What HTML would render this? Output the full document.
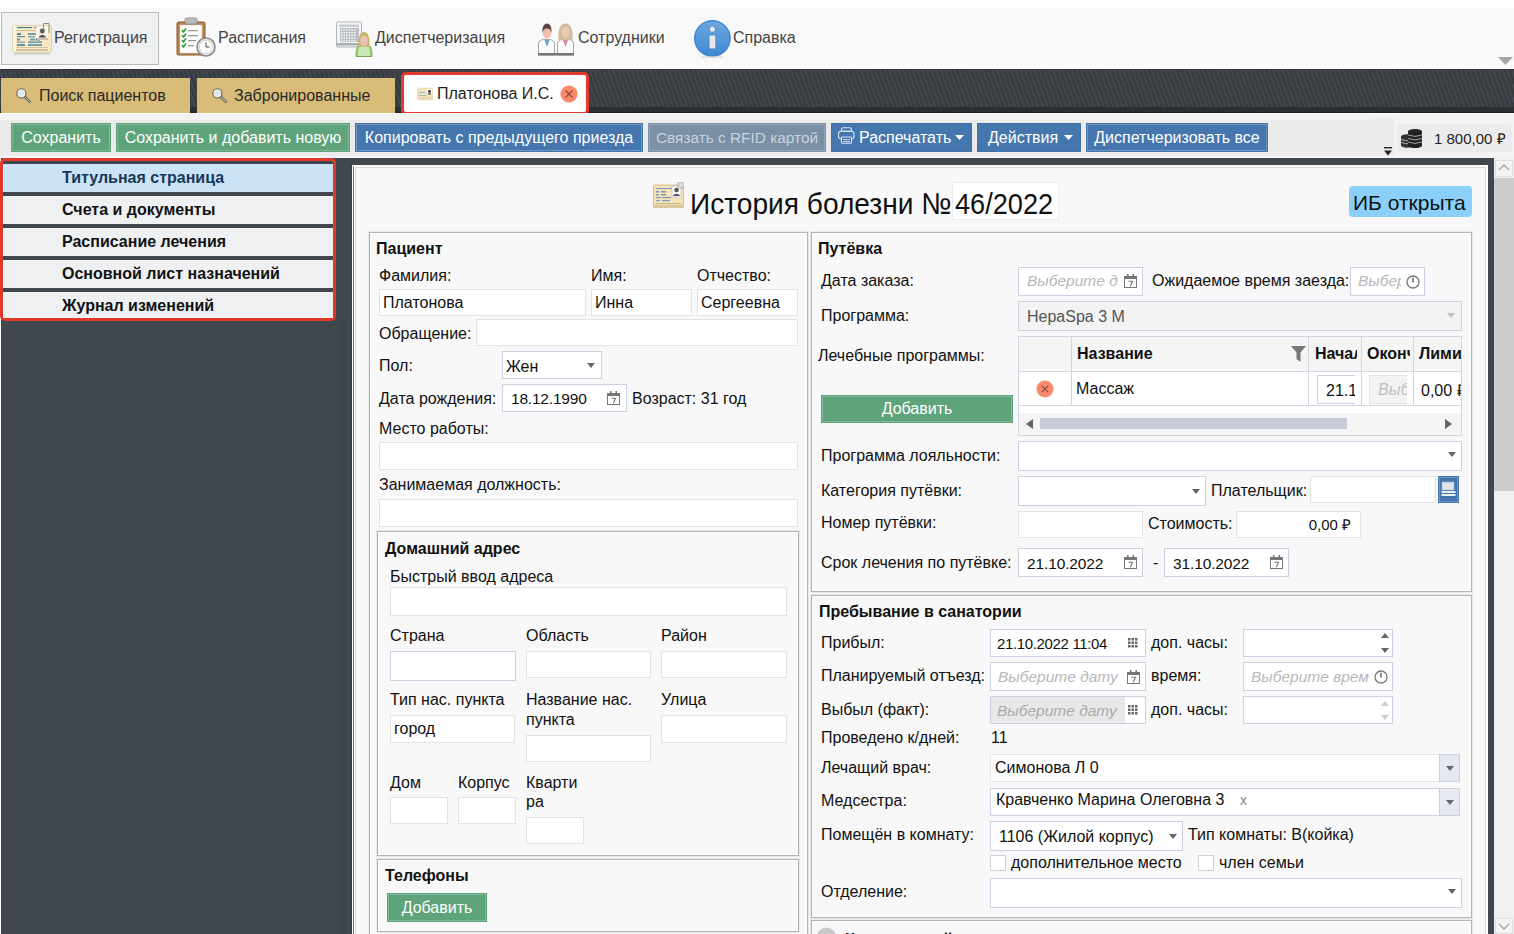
<!DOCTYPE html>
<html><head><meta charset="utf-8">
<style>
*{box-sizing:border-box;margin:0;padding:0}
html,body{width:1514px;height:934px;overflow:hidden;background:#f7f7f7;font-family:"Liberation Sans",sans-serif;font-size:16px;color:#111;position:relative}
.a{position:absolute;display:block}
.t{position:absolute;white-space:nowrap;font-size:16px;line-height:16px}
</style></head><body>
<div class="a" style="left:0px;top:0px;width:1514px;height:8px;background:#ffffff;"></div>
<div class="a" style="left:0px;top:8px;width:1514px;height:60px;background:#f9f9f9;"></div>
<div class="a" style="left:0px;top:67px;width:1514px;height:2px;background:#fdfdfd;"></div>
<div class="a" style="left:0px;top:8px;width:1px;height:60px;background:#ffffff;"></div>
<div class="a" style="left:1px;top:12px;width:158px;height:53px;background:#eff0f2;border:1px solid #b9b9b9;"></div>
<div class="t" style="left:54px;top:30px;color:#444;">Регистрация</div>
<div class="t" style="left:218px;top:30px;color:#444;">Расписания</div>
<div class="t" style="left:375px;top:30px;color:#444;">Диспетчеризация</div>
<div class="t" style="left:578px;top:30px;color:#444;">Сотрудники</div>
<div class="t" style="left:733px;top:30px;color:#444;">Справка</div>
<svg class="a" style="left:12px;top:22px;" width="42" height="35" viewBox="0 0 42 35">
<rect x="2" y="30.5" width="36" height="2.5" fill="#cfcfcf" opacity="0.8"/>
<rect x="0.7" y="3.4" width="38.8" height="27.2" rx="2.2" fill="#f7e9c6" stroke="#d9cda9" stroke-width="0.9"/>
<rect x="1.3" y="4" width="2.5" height="26" fill="#fdf5dd"/>
<g fill="#3f7f9f">
<rect x="5" y="5" width="15" height="1.1"/><rect x="21" y="5" width="4" height="1.1" opacity="0.6"/>
<rect x="5" y="11" width="4" height="2" opacity="0.9"/><rect x="16" y="11" width="8" height="2" opacity="0.7"/>
<rect x="5" y="14" width="8" height="1.2" opacity="0.8"/><rect x="16" y="14" width="7" height="1.2" opacity="0.7"/>
<rect x="5" y="16.5" width="3" height="2" opacity="0.8"/><rect x="18" y="16.5" width="5" height="2" opacity="0.7"/><rect x="24" y="16.5" width="4" height="2"/>
<rect x="5" y="19.5" width="8" height="1.2" opacity="0.7"/><rect x="16" y="19.5" width="14" height="1.2"/>
<rect x="5" y="22" width="8" height="2" opacity="0.8"/><rect x="16" y="22" width="14" height="2" opacity="0.7"/></g>
<rect x="4" y="8" width="20" height="0.9" fill="#cbbb98"/>
<rect x="4" y="25" width="32" height="1" fill="#d6c7a4"/>
<rect x="4" y="27" width="32" height="2" fill="#d2c4a6"/>
<rect x="25" y="16" width="11" height="2" fill="#cdbf9d"/>
<rect x="24.8" y="4.8" width="11.3" height="11.1" fill="#fff"/>
<rect x="26.5" y="6" width="8" height="9.5" fill="#ece9df"/>
<circle cx="30.3" cy="9" r="2.4" fill="#5a5a55"/><path d="M26.8 15.5c.3-3.5 6.7-3.5 7 0z" fill="#4a4a46"/>
<path d="M31.5 8V1.5h5.5V11" fill="none" stroke="#8b8b8b" stroke-width="1"/>
</svg>
<svg class="a" style="left:176px;top:17px;" width="42" height="40" viewBox="0 0 42 40">
<rect x="1" y="5" width="28" height="33" rx="1.5" fill="#b8804a" stroke="#8a5a2a"/>
<rect x="4" y="8" width="22" height="28" fill="#fff" stroke="#ccc" stroke-width="0.6"/>
<rect x="9" y="1" width="12" height="6" rx="1.5" fill="#bbb" stroke="#888" stroke-width="0.8"/>
<g stroke="#2a9a2a" stroke-width="1.5" fill="none"><path d="M6 13l1.5 2 2.5-3.5"/><path d="M6 18l1.5 2 2.5-3.5"/><path d="M6 23l1.5 2 2.5-3.5"/><path d="M6 28l1.5 2 2.5-3.5"/></g>
<g fill="#999"><rect x="12" y="13" width="10" height="1.3"/><rect x="12" y="18" width="10" height="1.3"/><rect x="12" y="23" width="8" height="1.3"/><rect x="12" y="28" width="6" height="1.3"/></g>
<circle cx="30" cy="30" r="9" fill="#e9e9e9" stroke="#8a8a8a" stroke-width="1.6"/>
<circle cx="30" cy="30" r="6.5" fill="#fff" stroke="#bbb" stroke-width="0.6"/>
<path d="M30 25.5v4.5h3.5" stroke="#333" stroke-width="0.9" fill="none"/>
</svg>
<svg class="a" style="left:336px;top:20px;" width="40" height="38" viewBox="0 0 40 38">
<rect x="0.5" y="2" width="25" height="25" rx="1" fill="#f4f7f9" stroke="#b5b5b5"/>
<rect x="3" y="4.5" width="20" height="2.5" fill="#c9ced3"/>
<rect x="4" y="8" width="19" height="14" fill="#b9bfc5"/>
<rect x="1" y="23" width="24" height="2.5" fill="#a9adb1"/>
<g fill="#fff"><rect x="5.0" y="9.3" width="1.4" height="1.4"/><rect x="7.6" y="9.3" width="1.4" height="1.4"/><rect x="10.2" y="9.3" width="1.4" height="1.4"/><rect x="12.8" y="9.3" width="1.4" height="1.4"/><rect x="15.4" y="9.3" width="1.4" height="1.4"/><rect x="18.0" y="9.3" width="1.4" height="1.4"/><rect x="5.0" y="12.0" width="1.4" height="1.4"/><rect x="7.6" y="12.0" width="1.4" height="1.4"/><rect x="10.2" y="12.0" width="1.4" height="1.4"/><rect x="12.8" y="12.0" width="1.4" height="1.4"/><rect x="15.4" y="12.0" width="1.4" height="1.4"/><rect x="18.0" y="12.0" width="1.4" height="1.4"/><rect x="5.0" y="14.7" width="1.4" height="1.4"/><rect x="7.6" y="14.7" width="1.4" height="1.4"/><rect x="10.2" y="14.7" width="1.4" height="1.4"/><rect x="12.8" y="14.7" width="1.4" height="1.4"/><rect x="15.4" y="14.7" width="1.4" height="1.4"/><rect x="18.0" y="14.7" width="1.4" height="1.4"/><rect x="5.0" y="17.4" width="1.4" height="1.4"/><rect x="7.6" y="17.4" width="1.4" height="1.4"/><rect x="10.2" y="17.4" width="1.4" height="1.4"/><rect x="12.8" y="17.4" width="1.4" height="1.4"/><rect x="15.4" y="17.4" width="1.4" height="1.4"/><rect x="18.0" y="17.4" width="1.4" height="1.4"/><rect x="5.0" y="20.1" width="1.4" height="1.4"/><rect x="7.6" y="20.1" width="1.4" height="1.4"/><rect x="10.2" y="20.1" width="1.4" height="1.4"/><rect x="12.8" y="20.1" width="1.4" height="1.4"/><rect x="15.4" y="20.1" width="1.4" height="1.4"/><rect x="18.0" y="20.1" width="1.4" height="1.4"/><rect x="20.6" y="9.3" width="1.4" height="1.4" fill="#f2a0a8"/><rect x="20.6" y="12.0" width="1.4" height="1.4" fill="#f2a0a8"/><rect x="20.6" y="14.7" width="1.4" height="1.4" fill="#f2a0a8"/><rect x="20.6" y="17.4" width="1.4" height="1.4" fill="#f2a0a8"/><rect x="20.6" y="20.1" width="1.4" height="1.4" fill="#f2a0a8"/></g>
<path d="M20 36.5c0-6 1-10 3-11h10c2 1 3 5 3 11z" fill="#9ad07e" stroke="#5f9a45" stroke-width="0.8"/>
<path d="M23.5 26h9c1 3 1.5 6 1.5 10h-12c0-4 .5-7 1.5-10z" fill="#c9eab5"/>
<path d="M22.5 27c-.5-9 1-15 5.5-15s6 6 5.5 15z" fill="#c9b56a"/>
<ellipse cx="28" cy="21" rx="3.8" ry="5.5" fill="#eac3b5"/>
</svg>
<svg class="a" style="left:537px;top:22px;" width="38" height="34" viewBox="0 0 38 34">
<path d="M20.5 33V22c0-3 2-4 5-4.5h6c3 .5 5 1.5 5 4.5v11z" fill="#fbfbfb" stroke="#9a9a9a" stroke-width="0.9"/>
<path d="M26 18l2.5 7 2.5-7z" fill="#d98a98"/>
<path d="M21.5 18c-.8-10 1.5-16.5 7-16.5s7.8 6.5 7 16.5z" fill="#cdbd9c"/>
<ellipse cx="28.5" cy="10.5" rx="4.2" ry="6" fill="#efc6b6"/>
<path d="M1.5 33V22c0-3 2-4 5-4.5h6c3 .5 5 1.5 5 4.5v11z" fill="#fbfbfb" stroke="#9a9a9a" stroke-width="0.9"/>
<path d="M7.5 18l2.5 7 2.5-7z" fill="#6aa3cf"/>
<ellipse cx="10" cy="10.5" rx="4.3" ry="6" fill="#edc0ae"/>
<path d="M5.5 11c-.5-6 1.5-9.5 4.5-9.5s5 3.5 4.5 9.5c-.5-3-2-4.5-4.5-4.5s-4 1.5-4.5 4.5z" fill="#5a4646"/>
<rect x="1" y="31" width="36" height="2.5" fill="#777"/>
</svg>
<svg class="a" style="left:693px;top:20px;" width="40" height="40" viewBox="0 0 40 40">
<defs><linearGradient id="ig" x1="0" y1="0" x2="0" y2="1"><stop offset="0" stop-color="#6ca8df"/><stop offset="1" stop-color="#4189d2"/></linearGradient></defs>
<circle cx="19.4" cy="18.4" r="18.4" fill="#3d86d0"/>
<circle cx="19.4" cy="18.4" r="17" fill="url(#ig)"/>
<circle cx="19.4" cy="9.2" r="3.3" fill="#3d86d0"/><circle cx="19.4" cy="9.2" r="2.6" fill="#e8e8e8"/>
<rect x="15.8" y="14.6" width="7.2" height="14.6" fill="#3d86d0"/>
<rect x="16.5" y="15.4" width="5.8" height="13" fill="#e8e8e8"/>
<rect x="8" y="36.5" width="22" height="1" fill="#cfcfcf"/>
</svg>
<svg class="a" style="left:1498px;top:57px;" width="16" height="8" viewBox="0 0 16 8"><path d="M0 0h15l-7.5 8z" fill="#a4a4a4"/></svg>
<div class="a" style="left:0px;top:69px;width:1514px;height:38px;background:repeating-linear-gradient(70deg,#373c41 0px,#373c41 2.4px,#42474d 2.4px,#42474d 4.4px);"></div>
<div class="a" style="left:0px;top:69px;width:1514px;height:1px;background:#303337;"></div>
<div class="a" style="left:0px;top:107px;width:1514px;height:6px;background:#2b2f33;"></div>
<div class="a" style="left:0px;top:112px;width:1514px;height:1px;background:#1f2225;"></div>
<div class="a" style="left:1px;top:78px;width:189px;height:35px;background:#d8bc78;"></div>
<div class="a" style="left:197px;top:78px;width:198px;height:35px;background:#d8bc78;"></div>
<svg class="a" style="left:16px;top:88px;" width="16" height="16" viewBox="0 0 16 16"><path d="M9 9l4.6 4.6" stroke="#5f5a4c" stroke-width="2.6" stroke-linecap="round"/><path d="M9.3 9.3l4.2 4.2" stroke="#b4b4c0" stroke-width="1.1" stroke-linecap="round"/><circle cx="5.4" cy="5.4" r="4.6" fill="#e6ecec" stroke="#6b6350" stroke-width="1.1"/><path d="M1.8 5.2h6.8" stroke="#c9d6dc" stroke-width="0.6"/></svg>
<svg class="a" style="left:212px;top:88px;" width="16" height="16" viewBox="0 0 16 16"><path d="M9 9l4.6 4.6" stroke="#5f5a4c" stroke-width="2.6" stroke-linecap="round"/><path d="M9.3 9.3l4.2 4.2" stroke="#b4b4c0" stroke-width="1.1" stroke-linecap="round"/><circle cx="5.4" cy="5.4" r="4.6" fill="#e6ecec" stroke="#6b6350" stroke-width="1.1"/><path d="M1.8 5.2h6.8" stroke="#c9d6dc" stroke-width="0.6"/></svg>
<div class="t" style="left:39px;top:88px;color:#2a2a2a;">Поиск пациентов</div>
<div class="t" style="left:234px;top:88px;color:#2a2a2a;">Забронированные</div>
<div class="a" style="left:401px;top:72px;width:188px;height:43px;background:#ffffff;border:3px solid #e23a2f;border-radius:5px;"></div>
<svg class="a" style="left:417px;top:87px;" width="16" height="14" viewBox="0 0 16 14"><rect x="0.5" y="1" width="15" height="12" rx="1" fill="#f1e3bd" stroke="#e0d3ad" stroke-width="0.6"/><rect x="10" y="2" width="5" height="6" fill="#fff"/><circle cx="12.5" cy="4.3" r="1.5" fill="#444"/><path d="M10.5 7.5c.5-2 3.5-2 4 0z" fill="#444"/><rect x="2" y="5" width="6" height="1" fill="#9fb6cc"/><rect x="2" y="8" width="7" height="1" fill="#9fb6cc"/><rect x="2" y="10.5" width="12" height="1" fill="#d6c9a6"/></svg>
<div class="t" style="left:437px;top:86px;color:#222;">Платонова И.С.</div>
<svg class="a" style="left:560px;top:85px;" width="18" height="18" viewBox="0 0 18 18"><circle cx="9" cy="9" r="8.6" fill="#fb8a6c"/><path d="M5.5 5.5l7 7M12.5 5.5l-7 7" stroke="#8a4a3c" stroke-width="1.2"/></svg>
<div class="a" style="left:0px;top:113px;width:1514px;height:45px;background:#f3f3f3;"></div>
<div class="a" style="left:0px;top:113px;width:1514px;height:1px;background:#fbfbfb;"></div>
<div class="a" style="left:0px;top:120px;width:1394px;height:37px;background:#ebebeb;"></div>
<div class="a" style="left:1375px;top:117px;width:19px;height:40px;background:#ebebeb;border-radius:0 4px 0 0;"></div>
<div class="a" style="left:0px;top:156px;width:1394px;height:2px;background:#f7f7f7;"></div>
<div class="a" style="left:11px;top:123px;width:100px;height:29px;background:#5fa37b;box-shadow:inset 0 0 0 1px #5fa37b, inset 0 0 0 2px #80b997;"></div>
<div class="t" style="left:11px;width:100px;text-align:center;top:130px;color:#ffffff">Сохранить</div>
<div class="a" style="left:116px;top:123px;width:234px;height:29px;background:#5fa37b;box-shadow:inset 0 0 0 1px #5fa37b, inset 0 0 0 2px #80b997;"></div>
<div class="t" style="left:116px;width:234px;text-align:center;top:130px;color:#ffffff">Сохранить и добавить новую</div>
<div class="a" style="left:355px;top:123px;width:288px;height:29px;background:#4576ae;box-shadow:inset 0 0 0 1px #4576ae, inset 0 0 0 2px #6b93c2;"></div>
<div class="t" style="left:355px;width:288px;text-align:center;top:130px;color:#ffffff">Копировать с предыдущего приезда</div>
<div class="a" style="left:648px;top:123px;width:178px;height:29px;background:#7b8fa6;box-shadow:inset 0 0 0 1px #7b8fa6, inset 0 0 0 2px #95a7ba;"></div>
<div class="t" style="left:648px;width:178px;text-align:center;top:130px;color:#c9d3dd"><span style="font-size:15.4px">Связать с RFID картой</span></div>
<div class="a" style="left:831px;top:123px;width:141px;height:29px;background:#4577ae;box-shadow:inset 0 0 0 1px #3f71a9;"></div>
<div class="t" style="left:859px;top:130px;color:#ffffff;">Распечатать</div>
<svg class="a" style="left:836px;top:126px;" width="20" height="20" viewBox="0 0 20 20"><g fill="none" stroke="#d9e3ee" stroke-width="1.1"><rect x="5.5" y="1.8" width="10" height="3.6" rx="1.5"/><rect x="2.5" y="5.2" width="15.5" height="7.6" rx="2.6"/></g><rect x="5.5" y="11" width="10" height="6.2" rx="0.8" fill="#4577ae" stroke="#d9e3ee" stroke-width="1.1"/><path d="M7 13.6h7M7 15.6h7" stroke="#d9e3ee" stroke-width="0.9"/></svg>
<svg class="a" style="left:955px;top:135px;" width="9" height="5" viewBox="0 0 9 5"><path d="M0 0h9l-4.5 5z" fill="#fff"/></svg>
<div class="a" style="left:977px;top:123px;width:104px;height:29px;background:#4577ae;box-shadow:inset 0 0 0 1px #3f71a9;"></div>
<div class="t" style="left:988px;top:130px;color:#ffffff;">Действия</div>
<svg class="a" style="left:1064px;top:135px;" width="9" height="5" viewBox="0 0 9 5"><path d="M0 0h9l-4.5 5z" fill="#fff"/></svg>
<div class="a" style="left:1086px;top:123px;width:182px;height:29px;background:#4576ae;box-shadow:inset 0 0 0 1px #4576ae, inset 0 0 0 2px #6b93c2;"></div>
<div class="t" style="left:1086px;width:182px;text-align:center;top:130px;color:#ffffff">Диспетчеризовать все</div>
<svg class="a" style="left:1384px;top:147px;" width="9" height="10" viewBox="0 0 9 10"><rect x="0" y="0" width="8" height="1.4" fill="#222"/><path d="M0 3.5h8l-4 5z" fill="#222"/></svg>
<div class="a" style="left:1397px;top:124px;width:115px;height:28px;background:#ececec;border-radius:3px;"></div>
<svg class="a" style="left:1400px;top:128px;" width="24" height="20" viewBox="0 0 24 20">
<g fill="#333"><ellipse cx="7" cy="8.5" rx="6" ry="2.2"/><rect x="1" y="8.5" width="12" height="9"/><ellipse cx="7" cy="17.5" rx="6" ry="2.2"/></g>
<g stroke="#ddd" stroke-width="0.7" fill="none"><path d="M1 11.5q6 2.5 12 0M1 14.5q6 2.5 12 0"/></g>
<g fill="#222"><ellipse cx="15" cy="3.5" rx="7" ry="2.6"/><rect x="8" y="3.5" width="14" height="14"/><ellipse cx="15" cy="17.5" rx="7" ry="2.6"/></g>
<g stroke="#ddd" stroke-width="0.7" fill="none"><path d="M8 7q7 2.8 14 0M8 10.5q7 2.8 14 0M8 14q7 2.8 14 0"/></g>
</svg>
<div class="t" style="left:1434px;top:131px;font-size:15px;line-height:15px;color:#222;">1 800,00 ₽</div>
<div class="a" style="left:0px;top:158px;width:1494px;height:776px;background:#41474e;"></div>
<div class="a" style="left:0px;top:158px;width:1px;height:776px;background:#ffffff;"></div>
<div class="a" style="left:0px;top:158px;width:336px;height:163px;border:3px solid #e4372c;border-radius:5px;"></div>
<div class="a" style="left:3px;top:164px;width:330px;height:28px;background:#cce2f5;box-shadow:inset 1px 0 0 #f8fbff;"></div>
<div class="t" style="left:62px;top:170px;font-weight:bold;color:#17385a;">Титульная страница</div>
<div class="a" style="left:3px;top:196px;width:330px;height:28px;background:#eff0f2;box-shadow:inset 1px 0 0 #f8fbff;"></div>
<div class="t" style="left:62px;top:202px;font-weight:bold;color:#111;">Счета и документы</div>
<div class="a" style="left:3px;top:228px;width:330px;height:28px;background:#eff0f2;box-shadow:inset 1px 0 0 #f8fbff;"></div>
<div class="t" style="left:62px;top:234px;font-weight:bold;color:#111;">Расписание лечения</div>
<div class="a" style="left:3px;top:260px;width:330px;height:28px;background:#eff0f2;box-shadow:inset 1px 0 0 #f8fbff;"></div>
<div class="t" style="left:62px;top:266px;font-weight:bold;color:#111;">Основной лист назначений</div>
<div class="a" style="left:3px;top:292px;width:330px;height:26px;background:#eff0f2;box-shadow:inset 1px 0 0 #f8fbff;"></div>
<div class="t" style="left:62px;top:298px;font-weight:bold;color:#111;">Журнал изменений</div>
<div class="a" style="left:340px;top:321px;width:6px;height:613px;background:#3e424a;"></div>
<div class="a" style="left:351px;top:165px;width:1px;height:769px;background:#363b41;"></div>
<div class="a" style="left:352px;top:165px;width:1136px;height:769px;background:#ffffff;"></div>
<div class="a" style="left:353px;top:166px;width:1px;height:768px;background:#6b7176;"></div>
<div class="a" style="left:355px;top:167px;width:1131px;height:767px;background:#f8f8f8;border-left:1px solid #d9d9d9;border-top:1px solid #d9d9d9;border-right:1px solid #d9d9d9;"></div>
<div class="a" style="left:1494px;top:158px;width:20px;height:776px;background:#f0f0f0;"></div>
<div class="a" style="left:1495px;top:160px;width:18px;height:17px;background:#f3f3f3;border:1px solid #e0e0e0;"></div>
<svg class="a" style="left:1498px;top:163px;" width="12" height="8" viewBox="0 0 12 8"><path d="M1 7l5-5 5 5" fill="none" stroke="#aaa" stroke-width="1.5"/></svg>
<div class="a" style="left:1494px;top:178px;width:20px;height:313px;background:#cdcdcd;"></div>
<div class="a" style="left:1495px;top:918px;width:18px;height:16px;background:#f3f3f3;border:1px solid #e0e0e0;"></div>
<svg class="a" style="left:1498px;top:923px;" width="12" height="8" viewBox="0 0 12 8"><path d="M1 1l5 5 5-5" fill="none" stroke="#aaa" stroke-width="1.5"/></svg>
<svg class="a" style="left:653px;top:182px;" width="32" height="27" viewBox="0 0 32 27">
<rect x="0.5" y="3" width="30" height="22" rx="2" fill="#f3e3b8" stroke="#d6c08a"/>
<rect x="0.5" y="23" width="30" height="3" fill="#d9c89a"/>
<g fill="#7f98b8"><rect x="3" y="6" width="16" height="1"/><rect x="3" y="9" width="3" height="1.5"/><rect x="8" y="9" width="5" height="1.5"/>
<rect x="3" y="12" width="3" height="1.5"/><rect x="8" y="12" width="5" height="1.5"/><rect x="3" y="15" width="5" height="1.2"/><rect x="9" y="15" width="9" height="1.2"/>
<rect x="3" y="18" width="4" height="1.2"/><rect x="9" y="18" width="8" height="1.2"/></g>
<rect x="3" y="21" width="25" height="1.2" fill="#c9b98f"/>
<rect x="19" y="4" width="9" height="11" fill="#fff" stroke="#bbb" stroke-width="0.7"/>
<circle cx="23.5" cy="8" r="2.3" fill="#555"/><path d="M20 14c.8-3 6.2-3 7 0z" fill="#555"/>
<rect x="25" y="0" width="5" height="6" fill="#ddd" stroke="#999" stroke-width="0.6"/>
</svg>
<div class="t" style="left:690px;top:189px;font-size:30px;line-height:30px;color:#111;transform:scaleX(0.937);transform-origin:0 0;">История болезни №</div>
<div class="a" style="left:952px;top:182px;width:107px;height:38px;background:#ffffff;border:1px solid #ececec;"></div>
<div class="t" style="left:955px;top:189px;font-size:30px;line-height:30px;color:#111;transform:scaleX(0.905);transform-origin:0 0;">46/2022</div>
<div class="a" style="left:1349px;top:186px;width:123px;height:31px;background:#8ad0fa;border-radius:4px;"></div>
<div class="t" style="left:1353px;top:192px;font-size:21px;line-height:21px;color:#111;">ИБ открыта</div>
<div class="a" style="left:368px;top:231px;width:441px;height:760px;border:1px solid #e8e8e8;box-shadow:inset 0 0 0 1px #b4b4b4, inset 0 0 0 2px #fcfcfc;"></div>
<div class="a" style="left:810px;top:231px;width:663px;height:362px;border:1px solid #e8e8e8;box-shadow:inset 0 0 0 1px #b4b4b4, inset 0 0 0 2px #fcfcfc;"></div>
<div class="a" style="left:810px;top:594px;width:663px;height:325px;border:1px solid #e8e8e8;box-shadow:inset 0 0 0 1px #b4b4b4, inset 0 0 0 2px #fcfcfc;"></div>
<div class="a" style="left:810px;top:919px;width:663px;height:72px;border:1px solid #e8e8e8;box-shadow:inset 0 0 0 1px #b4b4b4, inset 0 0 0 2px #fcfcfc;"></div>
<div class="a" style="left:376px;top:530px;width:424px;height:327px;border:1px solid #e8e8e8;box-shadow:inset 0 0 0 1px #b4b4b4, inset 0 0 0 2px #fcfcfc;"></div>
<div class="a" style="left:376px;top:858px;width:424px;height:75px;border:1px solid #e8e8e8;box-shadow:inset 0 0 0 1px #b4b4b4, inset 0 0 0 2px #fcfcfc;"></div>
<div class="t" style="left:376px;top:241px;font-weight:bold;">Пациент</div>
<div class="t" style="left:379px;top:268px;">Фамилия:</div>
<div class="t" style="left:591px;top:268px;">Имя:</div>
<div class="t" style="left:697px;top:268px;">Отчество:</div>
<div class="a" style="left:379px;top:289px;width:207px;height:27px;background:#fff;border:1px solid #e3e3e3;"></div>
<div class="a" style="left:591px;top:289px;width:101px;height:27px;background:#fff;border:1px solid #e3e3e3;"></div>
<div class="a" style="left:697px;top:289px;width:101px;height:27px;background:#fff;border:1px solid #e3e3e3;"></div>
<div class="t" style="left:383px;top:295px;">Платонова</div>
<div class="t" style="left:595px;top:295px;">Инна</div>
<div class="t" style="left:701px;top:295px;">Сергеевна</div>
<div class="t" style="left:379px;top:326px;">Обращение:</div>
<div class="a" style="left:476px;top:319px;width:322px;height:27px;background:#fff;border:1px solid #e3e3e3;"></div>
<div class="t" style="left:379px;top:358px;">Пол:</div>
<div class="a" style="left:502px;top:351px;width:100px;height:28px;background:#fff;border:1px solid #cdd0e2;"></div>
<div class="t" style="left:506px;top:359px;">Жен</div>
<svg class="a" style="left:587px;top:363px;" width="8" height="5" viewBox="0 0 8 5"><path d="M0 0h8l-4.0 5z" fill="#666"/></svg>
<div class="t" style="left:379px;top:391px;">Дата рождения:</div>
<div class="a" style="left:502px;top:384px;width:125px;height:28px;background:#fff;border:1px solid #cdd0e2;"></div>
<div class="t" style="left:511px;top:391px;font-size:15.5px;line-height:15.5px;letter-spacing:-0.2px;">18.12.1990</div>
<svg class="a" style="left:607px;top:391px;" width="13" height="14" viewBox="0 0 13 14"><rect x="0.5" y="2.5" width="12" height="11" fill="none" stroke="#777"/><rect x="0.5" y="2.5" width="12" height="2.5" fill="#777"/><rect x="3" y="0" width="1.5" height="4" fill="#777"/><rect x="8.5" y="0" width="1.5" height="4" fill="#777"/><path d="M4.5 7.2h4l-2.2 5" fill="none" stroke="#777" stroke-width="1.1"/></svg>
<div class="t" style="left:632px;top:391px;">Возраст: 31 год</div>
<div class="t" style="left:379px;top:421px;">Место работы:</div>
<div class="a" style="left:379px;top:442px;width:419px;height:28px;background:#fff;border:1px solid #e3e3e3;"></div>
<div class="t" style="left:379px;top:477px;">Занимаемая должность:</div>
<div class="a" style="left:379px;top:499px;width:419px;height:28px;background:#fff;border:1px solid #e3e3e3;"></div>
<div class="t" style="left:385px;top:541px;font-weight:bold;">Домашний адрес</div>
<div class="t" style="left:390px;top:569px;">Быстрый ввод адреса</div>
<div class="a" style="left:390px;top:587px;width:397px;height:29px;background:#fff;border:1px solid #e3e3e3;"></div>
<div class="t" style="left:390px;top:628px;">Страна</div>
<div class="t" style="left:526px;top:628px;">Область</div>
<div class="t" style="left:661px;top:628px;">Район</div>
<div class="a" style="left:390px;top:651px;width:126px;height:30px;background:#fff;border:1px solid #cdd0e2;"></div>
<div class="a" style="left:526px;top:651px;width:125px;height:27px;background:#fff;border:1px solid #e3e3e3;"></div>
<div class="a" style="left:661px;top:651px;width:126px;height:27px;background:#fff;border:1px solid #e3e3e3;"></div>
<div class="t" style="left:390px;top:692px;">Тип нас. пункта</div>
<div class="t" style="left:526px;top:692px;">Название нас.</div>
<div class="t" style="left:526px;top:712px;">пункта</div>
<div class="t" style="left:661px;top:692px;">Улица</div>
<div class="a" style="left:390px;top:715px;width:125px;height:28px;background:#fff;border:1px solid #e3e3e3;"></div>
<div class="t" style="left:394px;top:721px;">город</div>
<div class="a" style="left:526px;top:735px;width:125px;height:27px;background:#fff;border:1px solid #e3e3e3;"></div>
<div class="a" style="left:661px;top:715px;width:126px;height:28px;background:#fff;border:1px solid #e3e3e3;"></div>
<div class="t" style="left:390px;top:775px;">Дом</div>
<div class="t" style="left:458px;top:775px;">Корпус</div>
<div class="t" style="left:526px;top:775px;">Кварти</div>
<div class="t" style="left:526px;top:794px;">ра</div>
<div class="a" style="left:390px;top:797px;width:58px;height:27px;background:#fff;border:1px solid #e3e3e3;"></div>
<div class="a" style="left:458px;top:797px;width:58px;height:27px;background:#fff;border:1px solid #e3e3e3;"></div>
<div class="a" style="left:526px;top:817px;width:58px;height:27px;background:#fff;border:1px solid #e3e3e3;"></div>
<div class="t" style="left:385px;top:868px;font-weight:bold;">Телефоны</div>
<div class="a" style="left:387px;top:893px;width:100px;height:29px;background:#5fa37b;box-shadow:inset 0 0 0 1px #5fa37b, inset 0 0 0 2px #80b997;"></div>
<div class="t" style="left:387px;width:100px;text-align:center;top:900px;color:#fff">Добавить</div>
<div class="t" style="left:818px;top:241px;font-weight:bold;">Путёвка</div>
<div class="t" style="left:821px;top:273px;">Дата заказа:</div>
<div class="a" style="left:1018px;top:267px;width:125px;height:29px;background:#fff;border:1px solid #cdd0e2;"></div>
<div class="t" style="left:1027px;top:273px;font-size:15.5px;line-height:15.5px;font-style:italic;color:#b8b8b8;">Выберите д</div>
<svg class="a" style="left:1124px;top:274px;" width="13" height="14" viewBox="0 0 13 14"><rect x="0.5" y="2.5" width="12" height="11" fill="none" stroke="#777"/><rect x="0.5" y="2.5" width="12" height="2.5" fill="#777"/><rect x="3" y="0" width="1.5" height="4" fill="#777"/><rect x="8.5" y="0" width="1.5" height="4" fill="#777"/><path d="M4.5 7.2h4l-2.2 5" fill="none" stroke="#777" stroke-width="1.1"/></svg>
<div class="t" style="left:1152px;top:273px;">Ожидаемое время заезда:</div>
<div class="a" style="left:1350px;top:267px;width:75px;height:29px;background:#fff;border:1px solid #cdd0e2;"></div>
<div class="t" style="left:1358px;top:273px;width:43px;overflow:hidden;font-style:italic;color:#b8b8b8;font-size:15.5px;line-height:16px">Выберите</div>
<svg class="a" style="left:1406px;top:275px;" width="15" height="15" viewBox="0 0 15 15"><circle cx="7" cy="7" r="6" fill="none" stroke="#777" stroke-width="1.3"/><path d="M7 2.8v4.6" stroke="#777" stroke-width="1.7"/><path d="M3 7h1M10 7h1M7 10.5v1" stroke="#777" stroke-width="0.6" opacity="0.5"/></svg>
<div class="t" style="left:821px;top:308px;">Программа:</div>
<div class="a" style="left:1018px;top:301px;width:444px;height:30px;background:#f3f3f3;border:1px solid #cdd0e2;"></div>
<div class="t" style="left:1027px;top:309px;color:#555;">HepaSpa 3 M</div>
<svg class="a" style="left:1447px;top:313px;" width="8" height="5" viewBox="0 0 8 5"><path d="M0 0h8l-4.0 5z" fill="#c0c0c0"/></svg>
<div class="t" style="left:818px;top:348px;">Лечебные программы:</div>
<div class="a" style="left:821px;top:395px;width:192px;height:28px;background:#5fa37b;box-shadow:inset 0 0 0 1px #5fa37b, inset 0 0 0 2px #80b997;"></div>
<div class="t" style="left:821px;width:192px;text-align:center;top:401px;color:#fff">Добавить</div>
<div class="a" style="left:1018px;top:336px;width:444px;height:100px;background:#f5f5f5;border:1px solid #d2d5e4;"></div>
<div class="a" style="left:1019px;top:337px;width:442px;height:34px;background:#f5f5f5;"></div>
<div class="a" style="left:1019px;top:371px;width:442px;height:1px;background:#d2d5e4;"></div>
<div class="a" style="left:1019px;top:372px;width:442px;height:33px;background:#ffffff;"></div>
<div class="a" style="left:1019px;top:405px;width:442px;height:1px;background:#d2d5e4;"></div>
<div class="a" style="left:1019px;top:406px;width:442px;height:7px;background:#ffffff;"></div>
<div class="a" style="left:1071px;top:337px;width:1px;height:68px;background:#d2d5e4;"></div>
<div class="a" style="left:1308px;top:337px;width:1px;height:68px;background:#d2d5e4;"></div>
<div class="a" style="left:1361px;top:337px;width:1px;height:68px;background:#d2d5e4;"></div>
<div class="a" style="left:1413px;top:337px;width:1px;height:68px;background:#d2d5e4;"></div>
<div class="t" style="left:1077px;top:346px;font-weight:bold;">Название</div>
<svg class="a" style="left:1291px;top:346px;" width="15" height="16" viewBox="0 0 15 16"><path d="M0 0h15l-5.5 6.5v9.5l-4-3v-6.5z" fill="#777"/></svg>
<div class="t" style="left:1315px;top:346px;width:42px;overflow:hidden;font-weight:bold">Начало</div>
<div class="t" style="left:1367px;top:346px;width:43px;overflow:hidden;font-weight:bold">Окончание</div>
<div class="t" style="left:1419px;top:346px;width:42px;overflow:hidden;font-weight:bold">Лимит</div>
<svg class="a" style="left:1036px;top:380px;" width="18" height="18" viewBox="0 0 18 18"><circle cx="9" cy="9" r="8.5" fill="#fb8a6c"/><path d="M5.8 5.8l6.4 6.4M12.2 5.8l-6.4 6.4" stroke="#8a4a3c" stroke-width="1.2"/></svg>
<div class="t" style="left:1076px;top:381px;">Массаж</div>
<div class="a" style="left:1317px;top:375px;width:38px;height:29px;background:#fff;border:1px solid #cdd0e2;border-right:none;"></div>
<div class="t" style="left:1326px;top:383px;width:29px;overflow:hidden">21.10.2022</div>
<div class="a" style="left:1369px;top:375px;width:38px;height:29px;background:#f3f3f3;border:1px solid #e3e3e3;border-right:none;"></div>
<div class="t" style="left:1378px;top:382px;width:29px;overflow:hidden;font-style:italic;color:#c0c0c0">Выберите</div>
<div class="t" style="left:1421px;top:383px;width:40px;overflow:hidden">0,00 ₽</div>
<svg class="a" style="left:1026px;top:419px;" width="7" height="10" viewBox="0 0 7 10"><path d="M7 0v10l-7-5z" fill="#666"/></svg>
<div class="a" style="left:1040px;top:418px;width:307px;height:11px;background:#c8cad8;"></div>
<svg class="a" style="left:1445px;top:419px;" width="7" height="10" viewBox="0 0 7 10"><path d="M0 0v10l7-5z" fill="#666"/></svg>
<div class="t" style="left:821px;top:448px;">Программа лояльности:</div>
<div class="a" style="left:1018px;top:441px;width:444px;height:30px;background:#fff;border:1px solid #cdd0e2;"></div>
<svg class="a" style="left:1448px;top:452px;" width="8" height="5" viewBox="0 0 8 5"><path d="M0 0h8l-4.0 5z" fill="#666"/></svg>
<div class="t" style="left:821px;top:483px;">Категория путёвки:</div>
<div class="a" style="left:1018px;top:476px;width:188px;height:30px;background:#fff;border:1px solid #cdd0e2;"></div>
<svg class="a" style="left:1192px;top:489px;" width="8" height="5" viewBox="0 0 8 5"><path d="M0 0h8l-4.0 5z" fill="#666"/></svg>
<div class="t" style="left:1211px;top:483px;">Плательщик:</div>
<div class="a" style="left:1310px;top:476px;width:126px;height:27px;background:#fff;border:1px solid #e3e3e3;"></div>
<div class="a" style="left:1438px;top:476px;width:21px;height:27px;background:#4576ae;box-shadow:inset 0 0 0 1px #4576ae, inset 0 0 0 2px #6b93c2;"></div>
<svg class="a" style="left:1441px;top:481px;" width="15" height="16" viewBox="0 0 15 16"><rect x="1" y="1" width="12" height="8" fill="#dfe6ee" stroke="#a9b8c8" stroke-width="0.6"/><rect x="0.5" y="10" width="14" height="2" fill="#e8edf2"/><rect x="0.5" y="13" width="14" height="2" fill="#e8edf2"/></svg>
<div class="t" style="left:821px;top:515px;">Номер путёвки:</div>
<div class="a" style="left:1018px;top:511px;width:125px;height:27px;background:#fff;border:1px solid #e3e3e3;"></div>
<div class="t" style="left:1148px;top:516px;">Стоимость:</div>
<div class="a" style="left:1236px;top:511px;width:125px;height:27px;background:#fff;border:1px solid #e3e3e3;"></div>
<div class="t" style="left:1236px;width:115px;text-align:right;top:517px;font-size:15px;line-height:15px">0,00 ₽</div>
<div class="t" style="left:821px;top:555px;">Срок лечения по путёвке:</div>
<div class="a" style="left:1018px;top:548px;width:125px;height:29px;background:#fff;border:1px solid #cdd0e2;"></div>
<div class="t" style="left:1027px;top:556px;font-size:15.5px;line-height:15.5px;letter-spacing:-0.13px;">21.10.2022</div>
<svg class="a" style="left:1124px;top:555px;" width="13" height="14" viewBox="0 0 13 14"><rect x="0.5" y="2.5" width="12" height="11" fill="none" stroke="#777"/><rect x="0.5" y="2.5" width="12" height="2.5" fill="#777"/><rect x="3" y="0" width="1.5" height="4" fill="#777"/><rect x="8.5" y="0" width="1.5" height="4" fill="#777"/><path d="M4.5 7.2h4l-2.2 5" fill="none" stroke="#777" stroke-width="1.1"/></svg>
<div class="t" style="left:1153px;top:555px;">-</div>
<div class="a" style="left:1164px;top:548px;width:125px;height:29px;background:#fff;border:1px solid #cdd0e2;"></div>
<div class="t" style="left:1173px;top:556px;font-size:15.5px;line-height:15.5px;letter-spacing:-0.13px;">31.10.2022</div>
<svg class="a" style="left:1270px;top:555px;" width="13" height="14" viewBox="0 0 13 14"><rect x="0.5" y="2.5" width="12" height="11" fill="none" stroke="#777"/><rect x="0.5" y="2.5" width="12" height="2.5" fill="#777"/><rect x="3" y="0" width="1.5" height="4" fill="#777"/><rect x="8.5" y="0" width="1.5" height="4" fill="#777"/><path d="M4.5 7.2h4l-2.2 5" fill="none" stroke="#777" stroke-width="1.1"/></svg>
<div class="t" style="left:819px;top:604px;font-weight:bold;">Пребывание в санатории</div>
<div class="t" style="left:821px;top:635px;">Прибыл:</div>
<div class="a" style="left:990px;top:629px;width:156px;height:28px;background:#fff;border:1px solid #cdd0e2;"></div>
<div class="t" style="left:997px;top:636px;font-size:15px;line-height:15px;letter-spacing:-0.35px;">21.10.2022 11:04</div>
<svg class="a" style="left:1128px;top:638px;" width="10" height="10" viewBox="0 0 10 10"><rect x="0.0" y="0.0" width="2.5" height="2.5" fill="#666"/><rect x="0.0" y="3.5" width="2.5" height="2.5" fill="#666"/><rect x="0.0" y="7.0" width="2.5" height="2.5" fill="#666"/><rect x="3.5" y="0.0" width="2.5" height="2.5" fill="#666"/><rect x="3.5" y="3.5" width="2.5" height="2.5" fill="#666"/><rect x="3.5" y="7.0" width="2.5" height="2.5" fill="#666"/><rect x="7.0" y="0.0" width="2.5" height="2.5" fill="#666"/><rect x="7.0" y="3.5" width="2.5" height="2.5" fill="#666"/><rect x="7.0" y="7.0" width="2.5" height="2.5" fill="#666"/></svg>
<div class="t" style="left:1151px;top:635px;">доп. часы:</div>
<div class="a" style="left:1243px;top:629px;width:150px;height:28px;background:#fff;border:1px solid #cdd0e2;"></div>
<svg class="a" style="left:1381px;top:633px;" width="8" height="5" viewBox="0 0 8 5"><path d="M0 5h8l-4.0 -5z" fill="#666"/></svg>
<svg class="a" style="left:1381px;top:648px;" width="8" height="5" viewBox="0 0 8 5"><path d="M0 0h8l-4.0 5z" fill="#666"/></svg>
<div class="t" style="left:821px;top:668px;">Планируемый отъезд:</div>
<div class="a" style="left:990px;top:662px;width:156px;height:29px;background:#fff;border:1px solid #cdd0e2;"></div>
<div class="t" style="left:998px;top:669px;font-size:15.5px;line-height:15.5px;font-style:italic;color:#b8b8b8;">Выберите дату</div>
<svg class="a" style="left:1127px;top:670px;" width="13" height="14" viewBox="0 0 13 14"><rect x="0.5" y="2.5" width="12" height="11" fill="none" stroke="#777"/><rect x="0.5" y="2.5" width="12" height="2.5" fill="#777"/><rect x="3" y="0" width="1.5" height="4" fill="#777"/><rect x="8.5" y="0" width="1.5" height="4" fill="#777"/><path d="M4.5 7.2h4l-2.2 5" fill="none" stroke="#777" stroke-width="1.1"/></svg>
<div class="t" style="left:1151px;top:668px;">время:</div>
<div class="a" style="left:1243px;top:662px;width:150px;height:29px;background:#fff;border:1px solid #cdd0e2;"></div>
<div class="t" style="left:1251px;top:669px;font-size:15.5px;line-height:15.5px;font-style:italic;color:#b8b8b8;">Выберите врем</div>
<svg class="a" style="left:1374px;top:670px;" width="15" height="15" viewBox="0 0 15 15"><circle cx="7" cy="7" r="6" fill="none" stroke="#777" stroke-width="1.3"/><path d="M7 2.8v4.6" stroke="#777" stroke-width="1.7"/><path d="M3 7h1M10 7h1M7 10.5v1" stroke="#777" stroke-width="0.6" opacity="0.5"/></svg>
<div class="t" style="left:821px;top:702px;">Выбыл (факт):</div>
<div class="a" style="left:990px;top:696px;width:156px;height:28px;background:#fff;border:1px solid #cdd0e2;"></div>
<div class="a" style="left:991px;top:697px;width:134px;height:26px;background:#e8e8e8;"></div>
<div class="t" style="left:997px;top:703px;font-size:15.5px;line-height:15.5px;font-style:italic;color:#ababab;">Выберите дату</div>
<svg class="a" style="left:1128px;top:705px;" width="10" height="10" viewBox="0 0 10 10"><rect x="0.0" y="0.0" width="2.5" height="2.5" fill="#666"/><rect x="0.0" y="3.5" width="2.5" height="2.5" fill="#666"/><rect x="0.0" y="7.0" width="2.5" height="2.5" fill="#666"/><rect x="3.5" y="0.0" width="2.5" height="2.5" fill="#666"/><rect x="3.5" y="3.5" width="2.5" height="2.5" fill="#666"/><rect x="3.5" y="7.0" width="2.5" height="2.5" fill="#666"/><rect x="7.0" y="0.0" width="2.5" height="2.5" fill="#666"/><rect x="7.0" y="3.5" width="2.5" height="2.5" fill="#666"/><rect x="7.0" y="7.0" width="2.5" height="2.5" fill="#666"/></svg>
<div class="t" style="left:1151px;top:702px;">доп. часы:</div>
<div class="a" style="left:1243px;top:696px;width:150px;height:28px;background:#fff;border:1px solid #cdd0e2;"></div>
<svg class="a" style="left:1381px;top:701px;" width="8" height="5" viewBox="0 0 8 5"><path d="M0 5h8l-4.0 -5z" fill="#ccc"/></svg>
<svg class="a" style="left:1381px;top:715px;" width="8" height="5" viewBox="0 0 8 5"><path d="M0 0h8l-4.0 5z" fill="#ccc"/></svg>
<div class="t" style="left:821px;top:730px;">Проведено к/дней:</div>
<div class="t" style="left:991px;top:730px;">11</div>
<div class="t" style="left:821px;top:760px;">Лечащий врач:</div>
<div class="a" style="left:990px;top:754px;width:470px;height:28px;background:#fff;border:1px solid #e6e6e6;"></div>
<div class="a" style="left:1439px;top:754px;width:21px;height:28px;background:#e6e8f2;border:1px solid #cdd0e2;"></div>
<svg class="a" style="left:1446px;top:766px;" width="8" height="5" viewBox="0 0 8 5"><path d="M0 0h8l-4.0 5z" fill="#666"/></svg>
<div class="t" style="left:995px;top:760px;">Симонова Л 0</div>
<div class="t" style="left:821px;top:793px;">Медсестра:</div>
<div class="a" style="left:990px;top:788px;width:470px;height:28px;background:#fff;border:1px solid #cdd0e2;"></div>
<div class="a" style="left:1439px;top:788px;width:21px;height:28px;background:#e6e8f2;border:1px solid #cdd0e2;"></div>
<svg class="a" style="left:1446px;top:800px;" width="8" height="5" viewBox="0 0 8 5"><path d="M0 0h8l-4.0 5z" fill="#666"/></svg>
<div class="t" style="left:996px;top:792px;">Кравченко Марина Олеговна 3</div>
<div class="t" style="left:1240px;top:793px;font-size:14px;line-height:14px;color:#888;">x</div>
<div class="t" style="left:821px;top:827px;">Помещён в комнату:</div>
<div class="a" style="left:990px;top:821px;width:193px;height:30px;background:#fff;border:1px solid #cdd0e2;"></div>
<div class="t" style="left:999px;top:829px;">1106 (Жилой корпус)</div>
<svg class="a" style="left:1169px;top:834px;" width="8" height="5" viewBox="0 0 8 5"><path d="M0 0h8l-4.0 5z" fill="#666"/></svg>
<div class="t" style="left:1188px;top:827px;">Тип комнаты: В(койка)</div>
<div class="a" style="left:990px;top:855px;width:16px;height:16px;background:#fff;border:1px solid #d0d0d0;"></div>
<div class="t" style="left:1011px;top:855px;">дополнительное место</div>
<div class="a" style="left:1198px;top:855px;width:16px;height:16px;background:#fff;border:1px solid #d0d0d0;"></div>
<div class="t" style="left:1219px;top:855px;">член семьи</div>
<div class="t" style="left:821px;top:884px;">Отделение:</div>
<div class="a" style="left:990px;top:878px;width:472px;height:30px;background:#fff;border:1px solid #cdd0e2;"></div>
<svg class="a" style="left:1448px;top:889px;" width="8" height="5" viewBox="0 0 8 5"><path d="M0 0h8l-4.0 5z" fill="#666"/></svg>
<svg class="a" style="left:817px;top:927px;" width="20" height="7" viewBox="0 0 20 7"><circle cx="9.5" cy="10" r="9.5" fill="#c8c8c8"/></svg>
<div class="t" style="left:845px;top:932px;font-weight:bold;">Комментарий</div>
</body></html>
